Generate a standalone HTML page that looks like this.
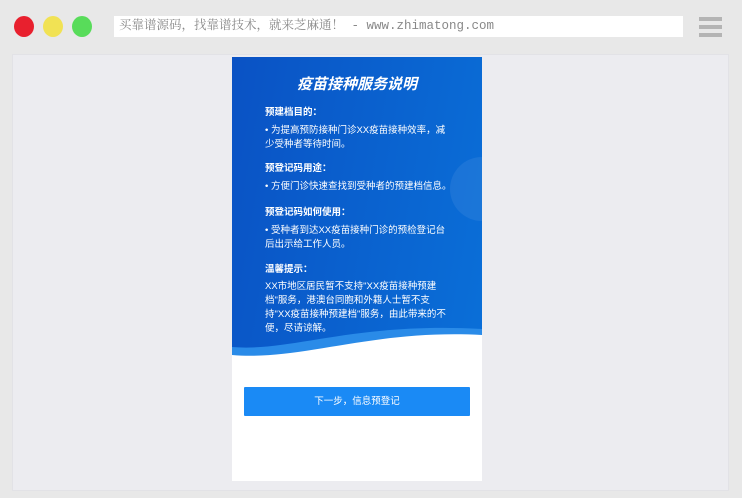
<!DOCTYPE html><html><head><meta charset="utf-8"><style>
body{margin:0;width:742px;height:498px;background:#e8e8e8;position:relative;overflow:hidden;font-family:"Liberation Sans","Noto Sans CJK SC",sans-serif}
.c{position:absolute;top:16px;width:20px;height:21px;border-radius:50%}
.addr{position:absolute;left:114px;top:16px;width:569px;height:21px;background:#fff;font-family:"Liberation Mono","Noto Serif CJK SC",monospace;font-size:12.5px;color:#888;line-height:21px;padding-left:5px;box-sizing:border-box;white-space:nowrap}
.hb{position:absolute;left:699px;width:23px;height:4px;background:#b4b4b4}
.panel{position:absolute;left:12px;top:54px;width:717px;height:437px;background:#ececf0;border:1px solid #e2e2e6;box-sizing:border-box}
.ph{position:absolute;left:232px;top:57px;width:250px;height:424px;background:#fff;overflow:hidden}
.blue{position:absolute;left:0;top:0;width:250px;height:300px;background:linear-gradient(100deg,#0a52c4,#0a6fd8)}
.t{position:absolute;color:#fff;font-size:9.5px;line-height:14px;left:33px;width:184px}
.w{width:200px}
.h{font-weight:bold}
.btn{position:absolute;left:12px;top:330px;width:226px;height:29px;background:#1a8af5;color:#fff;font-size:9.5px;text-align:center;line-height:29px;border-radius:1px}
</style></head><body>
<div class="c" style="left:14px;background:#e8202e"></div>
<div class="c" style="left:43px;background:#f1e254"></div>
<div class="c" style="left:72px;background:#58dc5a"></div>
<div class="addr">买靠谱源码，找靠谱技术，就来芝麻通！ - www.zhimatong.com</div>
<div class="hb" style="top:17px"></div><div class="hb" style="top:25px"></div><div class="hb" style="top:33px"></div>
<div class="panel"></div>
<div class="ph">
<div class="blue"></div>
<svg style="position:absolute;left:0;top:0" width="250" height="320"><circle cx="250" cy="132" r="32" fill="#fff" opacity=".07"/><path d="M0 290 C60 295 120 265 250 272 L250 320 L0 320Z" fill="#2a8be8"/><path d="M0 298 C70 304 140 272 250 278 L250 320 L0 320Z" fill="#fff"/></svg>
<div style="position:absolute;left:0;top:16px;width:250px;text-align:center;color:#fff;font-size:15px;font-weight:bold;font-style:italic">疫苗接种服务说明</div>
<div class="t h" style="top:49px">预建档目的：</div>
<div class="t" style="top:67px">• 为提高预防接种门诊XX疫苗接种效率，减少受种者等待时间。</div>
<div class="t h" style="top:105px">预登记码用途：</div>
<div class="t w" style="top:123px">• 方便门诊快速查找到受种者的预建档信息。</div>
<div class="t h" style="top:149px">预登记码如何使用：</div>
<div class="t" style="top:167px">• 受种者到达XX疫苗接种门诊的预检登记台后出示给工作人员。</div>
<div class="t h" style="top:206px">温馨提示：</div>
<div class="t" style="top:223px">XX市地区居民暂不支持"XX疫苗接种预建档"服务，港澳台同胞和外籍人士暂不支持"XX疫苗接种预建档"服务，由此带来的不便，尽请谅解。</div>
<div class="btn">下一步，信息预登记</div>
</div>
</body></html>
